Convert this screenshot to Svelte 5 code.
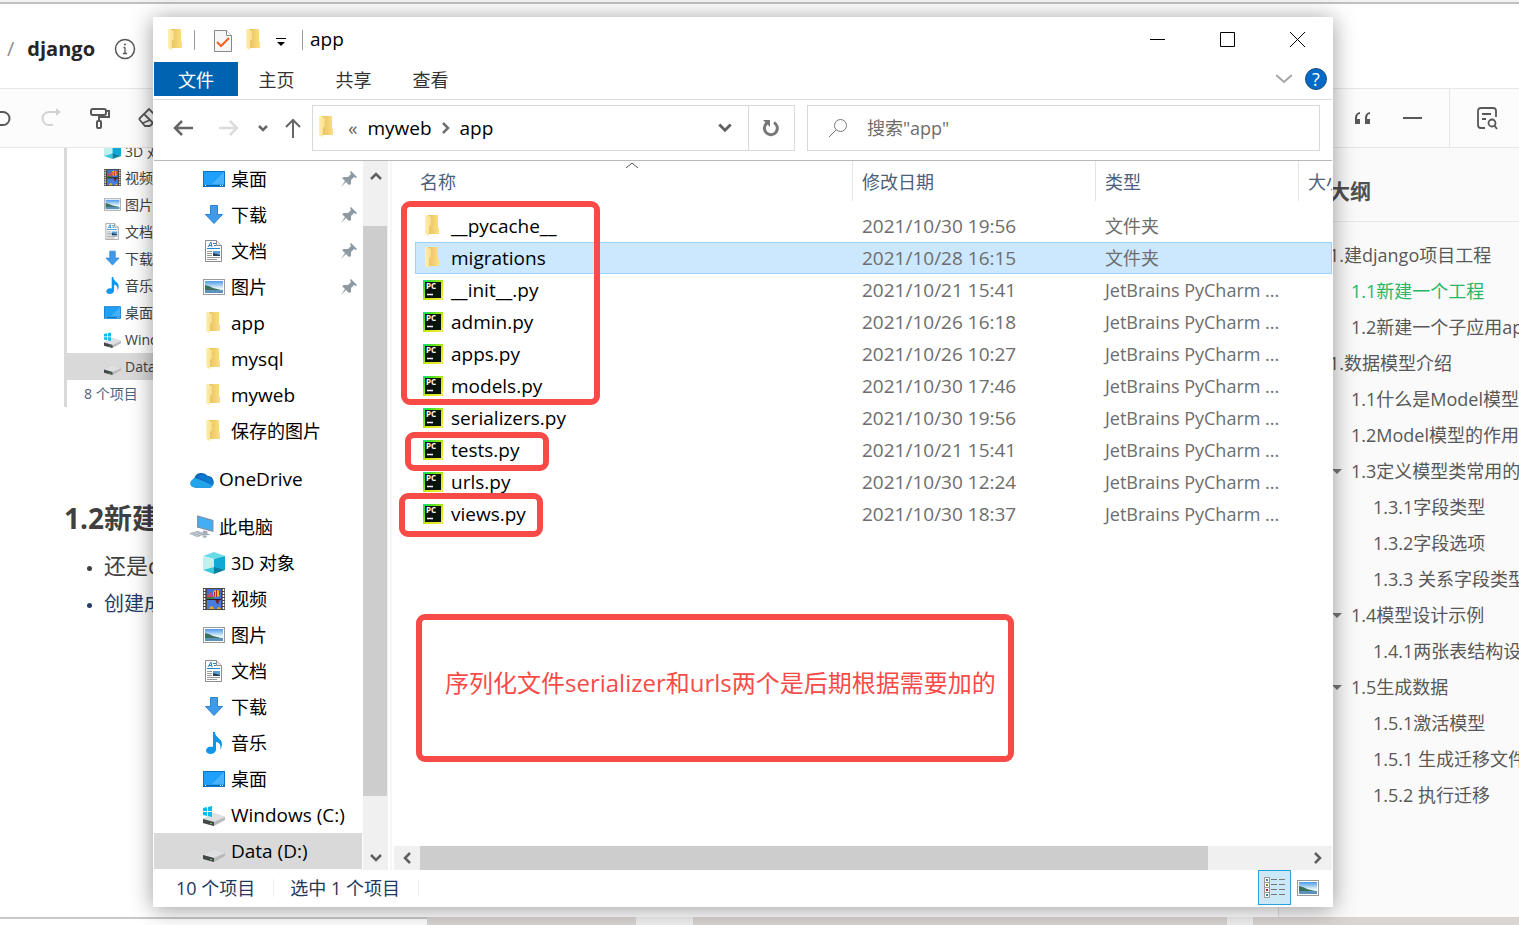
<script lang="ts">
  type Entry = { icon: string; text: string; pin?: boolean; top?: boolean; selected?: boolean };

  const sidebar: Entry[] = [
    { icon: 'desktop', text: '桌面', pin: true },
    { icon: 'download', text: '下载', pin: true },
    { icon: 'doc', text: '文档', pin: true },
    { icon: 'picture', text: '图片', pin: true },
    { icon: 'folder', text: 'app' },
    { icon: 'folder', text: 'mysql' },
    { icon: 'folder', text: 'myweb' },
    { icon: 'folder', text: '保存的图片' },
    { icon: 'cloud', text: 'OneDrive', top: true },
    { icon: 'pc', text: '此电脑', top: true },
    { icon: 'cube', text: '3D 对象' },
    { icon: 'video', text: '视频' },
    { icon: 'picture', text: '图片' },
    { icon: 'doc', text: '文档' },
    { icon: 'download', text: '下载' },
    { icon: 'music', text: '音乐' },
    { icon: 'desktop', text: '桌面' },
    { icon: 'windisk', text: 'Windows (C:)' },
    { icon: 'disk', text: 'Data (D:)', selected: true },
  ];

  const figureRows: Entry[] = [
    { icon: 'cube', text: '3D 对' },
    { icon: 'video', text: '视频' },
    { icon: 'picture', text: '图片' },
    { icon: 'doc', text: '文档' },
    { icon: 'download', text: '下载' },
    { icon: 'music', text: '音乐' },
    { icon: 'desktop', text: '桌面' },
    { icon: 'windisk', text: 'Wind' },
    { icon: 'disk', text: 'Data', selected: true },
  ];

  const files = [
    { name: '__pycache__', date: '2021/10/30 19:56', folder: true },
    { name: 'migrations', date: '2021/10/28 16:15', folder: true },
    { name: '__init__.py', date: '2021/10/21 15:41' },
    { name: 'admin.py', date: '2021/10/26 16:18' },
    { name: 'apps.py', date: '2021/10/26 10:27' },
    { name: 'models.py', date: '2021/10/30 17:46' },
    { name: 'serializers.py', date: '2021/10/30 19:56' },
    { name: 'tests.py', date: '2021/10/21 15:41' },
    { name: 'urls.py', date: '2021/10/30 12:24' },
    { name: 'views.py', date: '2021/10/30 18:37' },
  ];

  const outline = [
    { level: 0, text: '1.建django项目工程' },
    { level: 1, text: '1.1新建一个工程', active: true },
    { level: 1, text: '1.2新建一个子应用app' },
    { level: 0, text: '1.数据模型介绍' },
    { level: 1, text: '1.1什么是Model模型' },
    { level: 1, text: '1.2Model模型的作用' },
    { level: 1, text: '1.3定义模型类常用的', caret: true },
    { level: 2, text: '1.3.1字段类型' },
    { level: 2, text: '1.3.2字段选项' },
    { level: 2, text: '1.3.3 关系字段类型' },
    { level: 1, text: '1.4模型设计示例', caret: true },
    { level: 2, text: '1.4.1两张表结构设计' },
    { level: 1, text: '1.5生成数据', caret: true },
    { level: 2, text: '1.5.1激活模型' },
    { level: 2, text: '1.5.1 生成迁移文件' },
    { level: 2, text: '1.5.2 执行迁移' },
  ];

  let selectedFile = $state('migrations');
  let query = $state('');

  const isLatin = (text: string) => /^[\x20-\x7e]+$/.test(text);
</script>

{#snippet icon(name: string)}
  <svg class="icon" viewBox="0 0 22 22" aria-hidden="true">
    {#if name === 'folder'}
      <path d="M6 0h10v12l1 1v6H6z" fill="url(#folder-back)" />
      <path d="M3 0h1l5 2v8l-2 2v9l-4-2z" fill="url(#folder-front)" />
    {:else if name === 'desktop'}
      <rect x=".5" y="3.500" width="21" height="15" fill="#1ea0fb" stroke="#0a74c4" />
      <path d="M21 4v12H9z" fill="#48b1fb" />
      <path d="M1 17.500h20" stroke="#0b68b0" />
      <path d="M2 17.500h1M17 17.500h1M19 17.500h1" stroke="#fff" />
    {:else if name === 'download'}
      <path d="M7.500 1.500h7v9h5L11 19.500l-8.500-9h5z" fill="#3f9bea" stroke="#2a83d0" />
    {:else if name === 'doc'}
      <path d="M2.500.5h11l5 5v16h-16z" fill="#fff" stroke="#8d8d8d" />
      <path d="M13.500.5v5h5" fill="#eee" stroke="#8d8d8d" />
      <path d="M5 7l3-5 1 5M6 5.500h3M10 3.500h3M11 5.500h2M4 8.500h13" stroke="#1d87d0" fill="none" />
      <path d="M4 11.500h5M4 13.500h5M4 15.500h5M4 17.500h13M4 19.500h10" stroke="#999" />
      <rect x="10" y="11" width="7" height="5" fill="#5b9dd6" />
      <path d="M10 16v-3l7 2v1z" fill="#23405a" />
    {:else if name === 'picture'}
      <rect x=".5" y="3.500" width="21" height="15" fill="#fff" stroke="#9b9b9b" />
      <rect x="2" y="5" width="18" height="12" fill="url(#sky)" />
      <path d="M2 9q5 1 8 3l8 2v1H2z" fill="#3d6f5d" />
      <path d="M2 14h18v3H2z" fill="#5c93ba" />
    {:else if name === 'cloud'}
      <path d="M5 19a5 5 0 0 1-1-9 7 7 0 0 1 12-2 6 6 0 0 1 3 11z" fill="#0a64b4" />
      <path d="M7 9a6 6 0 0 1 9 0 6 6 0 0 1 5 8l-8-4z" fill="#0c79d0" />
      <path d="M0 15q1-4 5-5l5 2 11 5q-1 2-3 2H5a5 5 0 0 1-5-4z" fill="#23a3ea" />
    {:else if name === 'pc'}
      <path d="M7 1l14 4v10L7 11z" fill="#42aef6" stroke="#7c8da0" />
      <path d="M12 14l4 1v2l3 1-7 1-3-2 3-1z" fill="#a3adb8" />
      <path d="M0 17l7-2 6 2-6 3z" fill="#cfd6dd" stroke="#9aa5b0" stroke-width=".7" />
      <path d="M3 17l6 2M6 16l5 2" stroke="#8d98a3" stroke-width=".7" />
      <path d="M11 20l3-1 2 1-3 1z" fill="#a3adb8" />
    {:else if name === 'cube'}
      <path d="M0 4l11-4 11 4-11 3z" fill="#69dbe6" />
      <path d="M0 4l11 3v10L0 18z" fill="#c2f0ef" />
      <path d="M22 4L11 7v10l11 1z" fill="#10a9d6" />
      <path d="M0 18l11-3v7z" fill="#35cadb" />
      <path d="M22 18l-11-3v7z" fill="#087f9c" />
    {:else if name === 'video'}
      <rect width="22" height="22" fill="#4c4641" />
      <path d="M1.500 1v20M20.500 1v20" stroke="#fff" stroke-width="1.500" stroke-dasharray="2 1" />
      <rect x="4" y="1" width="14" height="10" fill="#416fd7" />
      <rect x="4" y="12" width="14" height="9" fill="#477bdc" />
      <circle cx="13.500" cy="5.500" r="3.500" fill="#eebd16" />
      <path d="M11 4h1v4h-1zM13 2h1v7h-1zM16 3h1v4h-1z" fill="#bd2635" />
      <path d="M4 8l4-4 3 6H4z" fill="#c94772" />
      <path d="M4 9h6v2H4z" fill="#3f7a3a" />
      <path d="M12 11h5l-2 5h-1z" fill="#6a2a20" />
      <path d="M6 21q3-6 5 0M14 21q2-4 4 0" fill="#f1a51b" />
      <path d="M4 11.500h14" stroke="#211f25" />
    {:else if name === 'music'}
      <path d="M10 0h2c0 6 7 6 7 12 0 3-1 4-2 6 2-7-3-8-4-8v8c-1 5-9 5-10 1 0-4 4-5 7-4z" fill="#0c96ee" />
    {:else if name === 'disk' || name === 'windisk'}
      <path d="M0 15l11-6 11 4v3l-11 6L0 19z" fill="#b9babc" />
      <path d="M0 15l11-6 11 4-11 5z" fill="#dfe0e2" />
      <path d="M0 15l11 3v4L0 19z" fill="#454849" />
      <path d="M7 19h2v1H7z" fill="#55d060" />
      {#if name === 'windisk'}
        <path d="M0 4l4-1v4H0zM5 3l4-1v5H5zM0 8h4v4l-4-1zM5 8h4v5l-4-1z" fill="#0abce9" />
      {/if}
    {:else if name === 'pycharm'}
      <rect x="1" y="1" width="20" height="20" fill="url(#pycharm)" />
      <rect x="3" y="3" width="16" height="16" fill="#07140c" />
      <text x="4" y="10" class="pc">PC</text>
      <path d="M5 15.500h6" stroke="#fff" stroke-width="1.500" />
    {/if}
  </svg>
{/snippet}

{#snippet chevron(direction: string)}
  <svg class="chevron {direction}" viewBox="0 0 14 14" aria-hidden="true">
    <path d="M2 4l5 5 5-5" fill="none" stroke="currentColor" stroke-width="2.500" />
  </svg>
{/snippet}

<svg class="defs" aria-hidden="true">
  <defs>
    <linearGradient id="folder-back"><stop stop-color="#e9c25c" /><stop offset="1" stop-color="#fbdf86" /></linearGradient>
    <linearGradient id="folder-front"><stop stop-color="#fff0b8" /><stop offset="1" stop-color="#f9dc86" /></linearGradient>
    <linearGradient id="sky" x2="0" y2="1"><stop stop-color="#4d99ec" /><stop offset=".6" stop-color="#e5f4f8" /></linearGradient>
    <linearGradient id="pycharm" y2="1"><stop stop-color="#21d789" /><stop offset=".2" stop-color="#36e52c" /><stop offset=".6" stop-color="#d9e80f" /><stop offset="1" stop-color="#f5ed59" /></linearGradient>
  </defs>
</svg>

<div class="page">
  <header class="doc-header">
    <span class="slash">/</span>
    <strong>django</strong>
    <svg viewBox="0 0 22 22" width="22" height="22" aria-hidden="true">
      <circle cx="11" cy="11" r="9.500" fill="none" stroke="#555" stroke-width="1.500" />
      <path d="M11 9.500v6M9.500 9.500H11M9 15.500h4" stroke="#555" stroke-width="1.300" />
      <circle cx="11" cy="6.500" r="1" fill="#555" />
    </svg>
  </header>

  <div class="doc-toolbar">
    <button aria-label="撤销">
      <svg viewBox="0 0 24 24"><path d="M2 6h11a6 6 0 0 1 0 13H3" fill="none" stroke="currentColor" stroke-width="2" /></svg>
    </button>
    <button aria-label="重做" class="dim">
      <svg viewBox="0 0 24 24"><path d="M18 6h-8a6.500 6.500 0 0 0 0 13h4" fill="none" stroke="currentColor" stroke-width="2" /><path d="M17 2l5 4-5 4z" fill="currentColor" /></svg>
    </button>
    <button aria-label="格式刷">
      <svg viewBox="0 0 24 24"><rect x="3" y="3" width="15" height="6" rx="2" fill="none" stroke="currentColor" stroke-width="2" /><path d="M18 5h3v6h-10v4" fill="none" stroke="currentColor" stroke-width="2" /><rect x="9" y="15" width="4" height="7" rx="1" fill="none" stroke="currentColor" stroke-width="2" /></svg>
    </button>
    <button aria-label="清除格式">
      <svg viewBox="0 0 24 24"><path d="M2 13L12 3l9 9-8 8M2 13l6 7h5M7 8l9 9M6 17l7 -3" fill="none" stroke="currentColor" stroke-width="1.800" /></svg>
    </button>
    <div class="tools-right">
      <button aria-label="引用">
        <svg viewBox="0 0 24 24"><path d="M9 6q-5 1-5 6v6h5v-5H6q0-5 3-5zM19 6q-5 1-5 6v6h5v-5h-3q0-5 3-5z" fill="currentColor" /></svg>
      </button>
      <button aria-label="分割线">
        <svg viewBox="0 0 24 24"><path d="M3 12h19" stroke="currentColor" stroke-width="2" /></svg>
      </button>
      <button aria-label="查找" class="find">
        <svg viewBox="0 0 24 24"><path d="M10 22H6q-3 0-3-3V5q0-3 3-3h12q3 0 3 3v6M7 8h9M7 13h4" fill="none" stroke="currentColor" stroke-width="1.800" /><circle cx="17" cy="17" r="3.500" fill="none" stroke="currentColor" stroke-width="1.800" /><path d="M19 19l3 4" stroke="currentColor" stroke-width="1.800" /></svg>
      </button>
    </div>
  </div>

  <div class="doc-body">
    <article>
      <div class="figure">
        {#each figureRows as row}
          <div class="figure-row" class:selected={row.selected}>{@render icon(row.icon)}{row.text}</div>
        {/each}
        <div class="figure-status">8 个项目</div>
      </div>
      <h2>1.2新建</h2>
      <ul>
        <li>还是d</li>
        <li class="blue">创建成</li>
      </ul>
    </article>
    <aside>
      <h3>大纲</h3>
      <nav>
        {#each outline as item}
          <a href="#outline" class="level-{item.level}" class:active={item.active}>
            {#if item.caret}<span class="caret"></span>{/if}{item.text}
          </a>
        {/each}
      </nav>
    </aside>
  </div>

  <div class="desktop-strip">
    <span class="white"></span><span class="wall a"></span><span class="light b"></span><span class="wall c"></span><span class="light d"></span><span class="wall e"></span>
  </div>
</div>

<div class="window">
  <div class="titlebar">
    {@render icon('folder')}
    <span class="sep"></span>
    <svg class="check" viewBox="0 0 18 22" aria-hidden="true">
      <path d="M.5.5h12l5 5v16H.5z" fill="#f7f7f7" stroke="#888" />
      <path d="M12.500.5v5h5" fill="#fff" stroke="#888" />
      <path d="M3 12l4 4 8-8" fill="none" stroke="#f3601c" stroke-width="2" />
    </svg>
    {@render icon('folder')}
    <svg class="drop" viewBox="0 0 10 8" aria-hidden="true"><path d="M0 0h10v1H0zM1 4h8L5 8z" /></svg>
    <span class="sep"></span>
    <span class="title">app</span>
    <div class="controls">
      <button aria-label="最小化"><svg viewBox="0 0 15 15"><path d="M0 7.500h15" /></svg></button>
      <button aria-label="最大化"><svg viewBox="0 0 15 15"><path d="M.5.5h14v14H.5z" /></svg></button>
      <button aria-label="关闭"><svg viewBox="0 0 15 15"><path d="M0 0l15 15M15 0L0 15" /></svg></button>
    </div>
  </div>

  <div class="ribbon">
    <button class="file">文件</button>
    <button>主页</button>
    <button>共享</button>
    <button>查看</button>
    <svg class="expand" viewBox="0 0 16 10" aria-hidden="true"><path d="M0 1l8 7 8-7" fill="none" stroke="#a5a5a5" stroke-width="2" /></svg>
    <button class="help" aria-label="帮助">?</button>
  </div>

  <div class="address-row">
    <button class="back" aria-label="后退"><svg viewBox="0 0 20 18"><path d="M20 9H2M9 2L2 9l7 7" /></svg></button>
    <button class="forward" aria-label="前进"><svg viewBox="0 0 20 18"><path d="M0 9h18M11 2l7 7-7 7" /></svg></button>
    <button class="recent" aria-label="最近的位置"><svg viewBox="0 0 10 10"><path d="M1 3l4 4 4-4" /></svg></button>
    <button class="up" aria-label="上移"><svg viewBox="0 0 16 20"><path d="M8 20V2M1 9l7-7 7 7" /></svg></button>
    <div class="address">
      {@render icon('folder')}
      <span class="more">«</span>
      <span>myweb</span>
      {@render chevron('right')}
      <span>app</span>
      <span class="open">{@render chevron('down')}</span>
      <button class="refresh" aria-label="刷新">
        <svg viewBox="0 0 18 18"><path d="M12 3.500A6.500 6.500 0 1 1 5 4" fill="none" stroke="#777" stroke-width="3" /><path d="M1 1h7v7z" fill="#777" /></svg>
      </button>
    </div>
    <label class="search">
      <svg viewBox="0 0 20 20" aria-hidden="true"><circle cx="12.500" cy="7.500" r="6" /><path d="M8 12l-7 7" /></svg>
      <input bind:value={query} placeholder={'搜索"app"'} aria-label="搜索" />
    </label>
  </div>

  <div class="content">
    <nav class="tree">
      {#each sidebar as item}
        <a href="#folder" class:top={item.top} class:selected={item.selected} class:latin={isLatin(item.text)}>
          {@render icon(item.icon)}
          <span>{item.text}</span>
          {#if item.pin}
            <svg class="pin" viewBox="0 0 16 16" aria-hidden="true"><path d="M9 1l1-1 6 6-1 1-2-1-3 3v4l-2 1-3-3-5 5 4-6-3-3 2-1h4l3-3z" fill="#8d99a3" /></svg>
          {/if}
        </a>
      {/each}
    </nav>
    <div class="vscroll">
      {@render chevron('up')}
      <div class="track"><div class="thumb"></div></div>
      {@render chevron('down')}
    </div>

    <main>
      <div class="list">
        <table>
          <thead>
            <tr>
              <th class="name">
                <span>名称</span>
                <svg class="sort" viewBox="0 0 12 6" aria-hidden="true"><path d="M0 6l6-5 6 5" fill="none" stroke="#555" /></svg>
              </th>
              <th class="date"><span>修改日期</span></th>
              <th class="type"><span>类型</span></th>
              <th class="size"><span>大小</span></th>
            </tr>
          </thead>
          <tbody>
            {#each files as file}
              <tr class:selected={file.name === selectedFile} onclick={() => (selectedFile = file.name)}>
                <td class="file-name"><div>{@render icon(file.folder ? 'folder' : 'pycharm')}{file.name}</div></td>
                <td>{file.date}</td>
                <td class="kind">{file.folder ? '文件夹' : 'JetBrains PyCharm ...'}</td>
                <td></td>
              </tr>
            {/each}
          </tbody>
        </table>
      </div>
      <div class="hscroll">
        {@render chevron('left')}
        <div class="track"><div class="thumb"></div></div>
        {@render chevron('right')}
      </div>

      <!-- red marks drawn over the file list -->
      <div class="mark first"></div>
      <div class="mark tests"></div>
      <div class="mark views"></div>
      <div class="mark note">序列化文件serializer和urls两个是后期根据需要加的</div>
    </main>
  </div>

  <footer>
    <span>10 个项目</span>
    <span class="picked">选中 1 个项目</span>
    <button class="view-details" aria-label="详细信息">
      <svg viewBox="0 0 22 22">
        <path d="M.5.5h5v20h-5zM.5 5.500h5M.5 10.500h5M.5 15.500h5" fill="#fff" stroke="#999" />
        <path d="M2 3h2M2 18h2" stroke="#3f7fa0" stroke-width="2" /><path d="M2 8h2" stroke="#8a8a20" stroke-width="2" /><path d="M2 13h2" stroke="#b02020" stroke-width="2" />
        <path d="M7 2.500h6M15 2.500h6M7 7.500h6M15 7.500h6M7 12.500h6M15 12.500h6M7 17.500h6M15 17.500h6" stroke="#777" />
      </svg>
    </button>
    <button class="view-large" aria-label="大图标">{@render icon('picture')}</button>
  </footer>
</div>

<style>
  :global(body) {
    margin: 0;
    overflow: hidden;
    background: #fff;
    font-family: 'Open Sans', 'Noto Sans CJK SC', sans-serif;
    font-size: 18px;
    line-height: 24px;
    color: #000;
  }

  * {
    box-sizing: border-box;
  }

  button {
    padding: 0;
    border: none;
    background: none;
    font: inherit;
    color: inherit;
    display: flex;
    align-items: center;
    justify-content: center;
  }

  a {
    color: inherit;
    text-decoration: none;
  }

  .defs {
    position: absolute;
    width: 0;
    height: 0;
  }

  .icon {
    width: 22px;
    height: 22px;
    flex: none;
  }

  .pc {
    font: bold 8px 'Open Sans', sans-serif;
    fill: #fff;
  }

  .chevron {
    width: 14px;
    height: 14px;
    flex: none;
    color: #606060;
  }

  .chevron.up {
    transform: rotate(180deg);
  }

  .chevron.left {
    transform: rotate(90deg);
  }

  .chevron.right {
    transform: rotate(-90deg);
  }

  /* document page behind the window */
  .page {
    height: 100vh;
    display: flex;
    flex-direction: column;
    border-top: 2px solid #f3f3f3;
  }

  .doc-header {
    height: 87px;
    flex: none;
    display: flex;
    align-items: center;
    padding: 6px 0 0 7px;
    border-top: 2px solid #c0c0c0;
    border-bottom: 1px solid #e7e7e7;
  }

  .doc-header strong {
    font-size: 20px;
    color: #262626;
    margin: 0 19px 0 13px;
  }

  .slash {
    font-size: 20px;
    color: #8c8c8c;
  }

  .doc-toolbar {
    height: 59px;
    flex: none;
    display: flex;
    align-items: center;
    gap: 25px;
    background: #fcfcfc;
    border-bottom: 1px solid #e7e7e7;
    color: #585858;
  }

  .doc-toolbar svg {
    width: 24px;
    height: 24px;
  }

  .doc-toolbar button:first-child {
    margin-left: -10px;
  }

  .doc-toolbar .dim {
    color: #d3d3d3;
  }

  .tools-right {
    margin-left: auto;
    align-self: stretch;
    display: flex;
    gap: 25px;
  }

  .tools-right .find {
    width: 70px;
    border-left: 1px solid #e7e7e7;
    padding-left: 4px;
  }

  .doc-body {
    flex: 1;
    min-height: 0;
    display: flex;
  }

  article {
    flex: 1;
    padding-left: 64px;
    color: #404040;
  }

  .figure {
    width: 400px;
    border-left: 3px solid #d9d9d9;
    overflow: hidden;
    font-size: 14px;
  }

  .figure-row {
    height: 27px;
    padding-left: 37px;
    display: flex;
    align-items: center;
    gap: 4px;
  }

  .figure-row:first-child {
    height: 16px;
    align-items: flex-end;
    line-height: 24px;
    overflow: hidden;
  }

  .figure-row .icon {
    width: 17px;
    height: 17px;
  }

  .figure-row:first-child .icon {
    margin-bottom: 5px;
  }

  .figure-row.selected {
    background: #d9d9d9;
  }

  .figure-status {
    height: 27px;
    line-height: 28px;
    padding-left: 17px;
    font-size: 14px;
    color: #4c6382;
  }

  h2 {
    margin: 91px 0 0;
    font-size: 28px;
    line-height: 40px;
  }

  ul {
    margin: 8px 0 0;
    padding-left: 40px;
    font-size: 22px;
    line-height: 38px;
  }

  li::marker {
    font-size: 14px;
  }

  li.blue {
    font-size: 20px;
    line-height: 40px;
    color: #243c66;
  }

  aside {
    width: 241px;
    flex: none;
    overflow: hidden;
    white-space: nowrap;
    background: #fafafa;
    border-left: 1px solid #e2e2e2;
    color: #585858;
  }

  h3 {
    margin: 0;
    height: 74px;
    line-height: 86px;
    padding-left: 50px;
    font-size: 21px;
    border-bottom: 1px solid #e7e7e7;
    color: #505050;
  }

  aside nav {
    padding-top: 15px;
  }

  aside a {
    display: flex;
    align-items: center;
    height: 36px;
  }

  .level-0 {
    padding-left: 50px;
  }

  .level-1 {
    padding-left: 72px;
  }

  .level-2 {
    padding-left: 94px;
  }

  aside .active {
    color: #25b864;
  }

  .caret {
    border: 5px solid transparent;
    border-top-color: #777;
    border-bottom: none;
    margin: 0 9px 0 -19px;
  }

  .desktop-strip {
    height: 8px;
    flex: none;
    display: flex;
  }

  .white {
    flex: 427;
    border-top: 2px solid #c8c8c8;
  }

  .wall {
    background: #d8d5d3;
  }

  .light {
    background: #f0f0f0;
  }

  .a {
    flex: 209;
  }

  .b {
    flex: 57;
  }

  .c {
    flex: 534;
  }

  .d {
    flex: 26;
  }

  .e {
    flex: 266;
  }

  /* explorer window */
  .window {
    position: absolute;
    inset: 17px 186px 18px 153px;
    display: flex;
    flex-direction: column;
    background: #fff;
    padding: 0 1px;
    box-shadow: 0 2px 22px rgba(0, 0, 0, 0.4);
    overflow: hidden;
  }

  .titlebar {
    height: 45px;
    flex: none;
    display: flex;
    align-items: center;
    padding-left: 11px;
    font-size: 19px;
  }

  .sep {
    width: 1px;
    height: 20px;
    background: #9a9a9a;
    margin: 0 7px;
  }

  .check {
    width: 18px;
    height: 22px;
    margin: 2px 11px 0 12px;
  }

  .titlebar .drop {
    width: 10px;
    height: 8px;
    margin: 5px 9px 0 11px;
  }

  .title {
    line-height: 22px;
    padding-bottom: 2px;
  }

  .controls {
    margin-left: auto;
    align-self: stretch;
    display: flex;
  }

  .controls button {
    width: 70px;
  }

  .controls svg {
    width: 15px;
    height: 15px;
    fill: none;
    stroke: #000;
  }

  .ribbon {
    height: 38px;
    flex: none;
    display: flex;
    align-items: center;
    border-bottom: 1px solid #dadbdc;
    padding: 0 5px 3px 0;
    color: #333;
  }

  .ribbon button {
    width: 77px;
    height: 34px;
    padding-top: 1px;
  }

  .ribbon .file {
    width: 84px;
    background: #0063b1;
    color: #fff;
  }

  .expand {
    width: 16px;
    height: 10px;
    margin: 0 13px 0 auto;
  }

  .ribbon .help {
    width: 22px;
    height: 22px;
    padding: 0;
    border-radius: 50%;
    border: 1px solid #174d7e;
    background: #0569c8;
    color: #fff;
  }

  .address-row {
    height: 61px;
    flex: none;
    display: flex;
    align-items: center;
    padding: 0 12px 4px 6px;
    border-bottom: 1px solid #b8b8b8;
  }

  .address-row > button {
    height: 46px;
  }

  .address-row > button svg {
    width: 20px;
    height: 18px;
    fill: none;
    stroke: #666;
    stroke-width: 2.5;
  }

  .address-row .back {
    width: 46px;
  }

  .address-row .forward {
    width: 45px;
  }

  .address-row .forward svg {
    stroke: #dcdcdc;
  }

  .address-row .recent {
    width: 23px;
  }

  .address-row .recent svg {
    width: 10px;
    height: 10px;
  }

  .address-row .up {
    width: 38px;
  }

  .address-row .up svg {
    width: 16px;
    height: 20px;
    stroke-width: 2;
  }

  .address {
    flex: 15 1 30px;
    height: 46px;
    display: flex;
    align-items: center;
    border: 1px solid #d9d9d9;
    margin-right: 12px;
    padding-left: 3px;
    font-size: 19px;
  }

  .address .more {
    color: #666;
    margin: 0 10px;
  }

  .address > .chevron {
    margin: 0 7px;
    color: #707070;
  }

  .address > .icon {
    margin-bottom: 2px;
  }

  .open {
    margin: 0 15px 0 auto;
    display: flex;
  }

  .open .chevron {
    width: 16px;
    height: 16px;
  }

  .refresh {
    width: 46px;
    align-self: stretch;
    border-left: 1px solid #d9d9d9;
  }

  .refresh svg {
    width: 18px;
    height: 18px;
  }

  .search {
    flex: 16 1 30px;
    height: 46px;
    display: flex;
    align-items: center;
    border: 1px solid #d9d9d9;
    padding-left: 20px;
    gap: 19px;
  }

  .search svg {
    width: 20px;
    height: 20px;
    flex: none;
    fill: none;
    stroke: #777;
  }

  .search input {
    flex: 1;
    min-width: 0;
    border: none;
    outline: none;
    padding: 0;
    font: inherit;
    background: none;
  }

  .search input::placeholder {
    color: #6d6d6d;
  }

  .content {
    flex: 1;
    min-height: 0;
    display: flex;
  }

  .tree {
    width: 208px;
    flex: none;
    overflow: hidden;
  }

  .tree a {
    height: 36px;
    display: flex;
    align-items: center;
    gap: 6px;
    padding: 0 5px 0 49px;
  }

  .tree a.top {
    margin: 12px 0;
    padding-left: 36px;
  }

  .tree a.top + a.top {
    margin-bottom: 0;
  }

  .tree a.top .icon {
    width: 24px;
    height: 24px;
    margin-right: -1px;
  }

  .tree a.selected {
    background: #d9d9d9;
  }

  .tree a.latin {
    font-size: 19px;
  }

  .pin {
    width: 16px;
    height: 16px;
    margin-left: auto;
  }

  .vscroll {
    width: 25px;
    flex: none;
    margin-left: 1px;
    padding: 8px 0 5px;
    display: flex;
    flex-direction: column;
    align-items: center;
    background: #f0f0f0;
  }

  .vscroll .track {
    flex: 1;
    width: 100%;
    padding: 43px 1px 55px 0;
  }

  .thumb {
    height: 100%;
    background: #cdcdcd;
  }

  main {
    flex: 1;
    min-width: 0;
    position: relative;
    display: flex;
    flex-direction: column;
    margin-left: 2px;
    border-left: 2px solid #f6f6f6;
  }

  .list {
    flex: 1;
    min-height: 0;
    overflow: hidden;
    padding-left: 23px;
  }

  table {
    width: 100%;
    table-layout: fixed;
    border-collapse: collapse;
    font-size: 19px;
    white-space: nowrap;
  }

  th {
    height: 49px;
    padding: 0 0 9px;
    font-size: 18px;
    font-weight: normal;
    text-align: left;
    color: #4c607a;
  }

  th span {
    display: block;
    height: 40px;
    line-height: 42px;
    padding-left: 9px;
    border-left: 1px solid #e5e5e5;
    overflow: hidden;
  }

  th.name {
    position: relative;
  }

  th.name span {
    border: none;
    padding-left: 5px;
  }

  .sort {
    position: absolute;
    left: calc(50% - 8px);
    top: 1px;
    width: 12px;
    height: 6px;
  }

  .date {
    width: 243px;
  }

  .type {
    width: 203px;
  }

  .size {
    width: 34px;
  }

  td {
    height: 32px;
    padding: 0 0 0 10px;
    color: #6d6d6d;
  }

  td.kind {
    font-size: 18px;
  }

  td.file-name {
    padding-left: 7px;
    color: #000;
  }

  .file-name div {
    display: flex;
    align-items: center;
    gap: 7px;
  }

  tr.selected {
    background: #cce8ff;
    outline: 1px solid #99d1ff;
    outline-offset: -1px;
  }

  .hscroll {
    height: 24px;
    flex: none;
    display: flex;
    align-items: center;
    margin-left: 2px;
    padding: 0 7px 0 6px;
    background: #f0f0f0;
  }

  .hscroll .track {
    flex: 1;
    height: 24px;
    padding: 0 103px 0 6px;
  }

  .mark {
    position: absolute;
    border: 6px solid #f84b48;
    border-radius: 9px;
  }

  .mark.first {
    left: 9px;
    top: 40px;
    width: 199px;
    height: 204px;
  }

  .mark.tests {
    left: 13px;
    top: 271px;
    width: 144px;
    height: 39px;
  }

  .mark.views {
    left: 7px;
    top: 332px;
    width: 144px;
    height: 44px;
  }

  .mark.note {
    left: 24px;
    top: 453px;
    width: 598px;
    height: 148px;
    display: flex;
    align-items: center;
    white-space: nowrap;
    padding: 0 0 10px 23px;
    font-size: 24px;
    color: #f84b48;
  }

  footer {
    height: 37px;
    flex: none;
    display: flex;
    align-items: center;
    padding: 0 13px 2px 22px;
    color: #1e395b;
  }

  footer span {
    padding-right: 18px;
    line-height: 18px;
    border-right: 1px solid #f0f0f0;
  }

  footer .picked {
    padding-left: 16px;
  }

  .view-details {
    width: 33px;
    height: 35px;
    margin: 0 6px 0 auto;
    border: 1px solid #26a0da;
    background: #cbe8f6;
  }

  .view-details svg {
    width: 22px;
    height: 22px;
  }
</style>
